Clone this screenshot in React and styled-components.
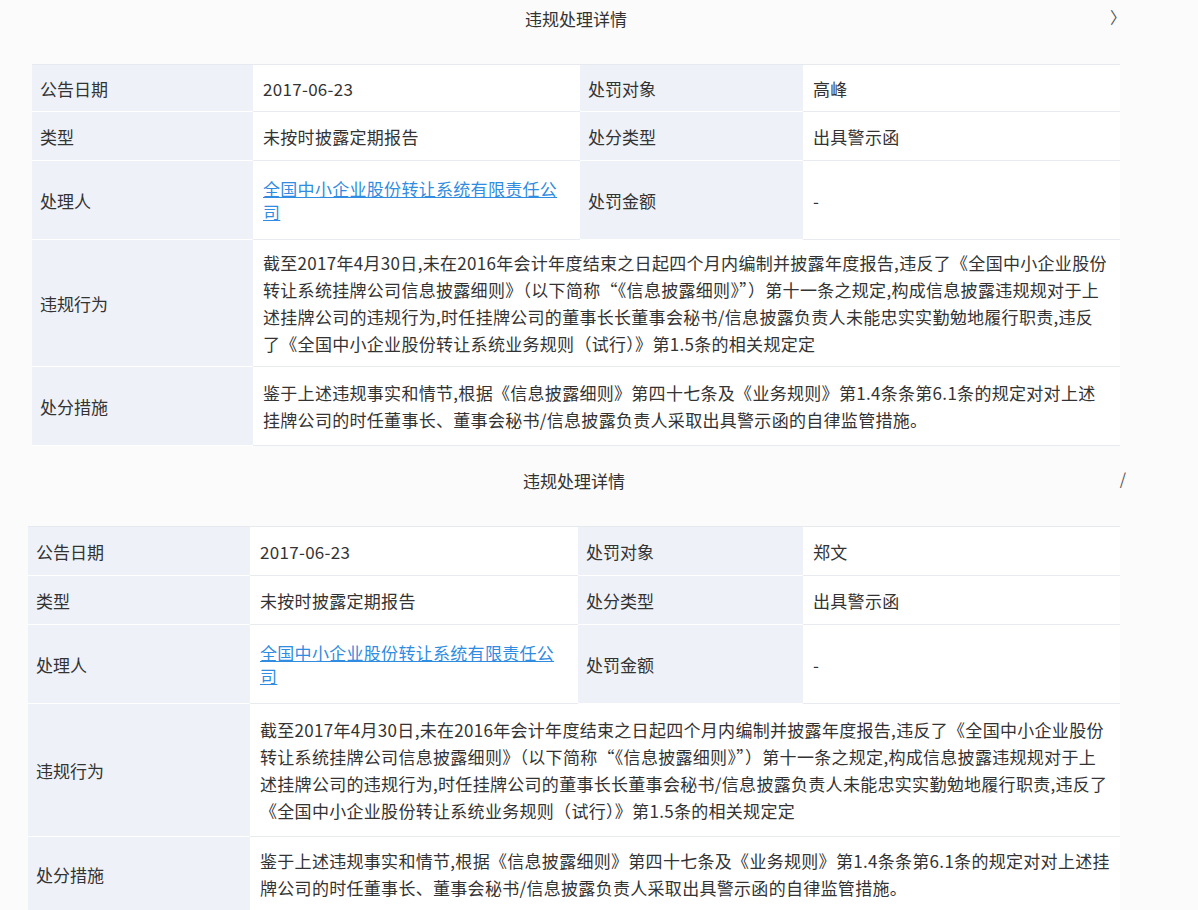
import React from "react";
import styled, { createGlobalStyle } from "styled-components";

const Global = createGlobalStyle`
  body { margin: 0; background: #fbfbfc; font-family: "Noto Sans CJK SC", "Liberation Sans", sans-serif; color: #333; }
`;

const Panel = styled.section`
  padding-left: ${p => p.$left}px;
  width: ${p => 1120 - p.$left}px;
  position: relative;
`;
const Title = styled.div`
  height: 36px;
  margin-bottom: 28px;
  display: flex; align-items: center; justify-content: center;
  font-size: 17px; color: #333;
`;
const Close = styled.span`
  position: absolute; right: -6px; top: ${p => p.$top}px;
  font-size: 16px; color: #555;
`;
const Grid = styled.div`
  display: grid;
  grid-template-columns: ${p => p.$cols};
  border-top: 1px solid #e6e9ee;
`;
const Label = styled.div`
  background: #eef2f8;
  display: flex; align-items: center;
  padding-left: 8px;
  font-size: 17px;
  min-height: ${p => p.$h}px;
  border-bottom: 1px solid #fff;
`;
const Value = styled.div`
  background: #fff;
  display: flex; align-items: center;
  padding: 4px 10px;
  font-size: 17px; line-height: 27px;
  letter-spacing: 0.3px;
  min-height: ${p => p.$h}px;
  box-sizing: border-box;
  border-bottom: 1px solid #e8ebef;
  grid-column: ${p => (p.$span ? "2 / 5" : "auto")};
`;
const Link = styled.span`
  color: #2f8ce0; text-decoration: underline; line-height: 23px;
  max-width: 300px; display: inline-block;
`;
const Spacer = styled.div`
  height: 16px;
`;

const Block = ({ left, cols, person, rows, closeTop, close }) => (
  <Panel $left={left}>
    <Title>违规处理详情</Title>
    <Close $top={closeTop}>{close}</Close>
    <Grid $cols={cols}>
      <Label $h={rows[0]}>公告日期</Label>
      <Value $h={rows[0]}>2017-06-23</Value>
      <Label $h={rows[0]}>处罚对象</Label>
      <Value $h={rows[0]}>{person}</Value>
      <Label $h={rows[1]}>类型</Label>
      <Value $h={rows[1]}>未按时披露定期报告</Value>
      <Label $h={rows[1]}>处分类型</Label>
      <Value $h={rows[1]}>出具警示函</Value>
      <Label $h={rows[2]}>处理人</Label>
      <Value $h={rows[2]}><Link>全国中小企业股份转让系统有限责任公司</Link></Value>
      <Label $h={rows[2]}>处罚金额</Label>
      <Value $h={rows[2]}>-</Value>
      <Label $h={rows[3]}>违规行为</Label>
      <Value $h={rows[3]} $span>截至2017年4月30日,未在2016年会计年度结束之日起四个月内编制并披露年度报告,违反了《全国中小企业股份转让系统挂牌公司信息披露细则》（以下简称“《信息披露细则》”）第十一条之规定,构成信息披露违规规对于上述挂牌公司的违规行为,时任挂牌公司的董事长长董事会秘书/信息披露负责人未能忠实实勤勉地履行职责,违反了《全国中小企业股份转让系统业务规则（试行）》第1.5条的相关规定定</Value>
      <Label $h={rows[4]}>处分措施</Label>
      <Value $h={rows[4]} $span>鉴于上述违规事实和情节,根据《信息披露细则》第四十七条及《业务规则》第1.4条条第6.1条的规定对对上述挂牌公司的时任董事长、董事会秘书/信息披露负责人采取出具警示函的自律监管措施。</Value>
    </Grid>
  </Panel>
);

export default function App() {
  return (
    <>
      <Global />
      <Block left={32} cols="221px 327px 223px 1fr" person="高峰" rows={[46, 48, 78, 126, 78]} closeTop={4} close="〉" />
      <Spacer />
      <Block left={28} cols="222px 328px 225px 1fr" person="郑文" rows={[48, 48, 78, 132, 74]} closeTop={4} close="/" />
    </>
  );
}
